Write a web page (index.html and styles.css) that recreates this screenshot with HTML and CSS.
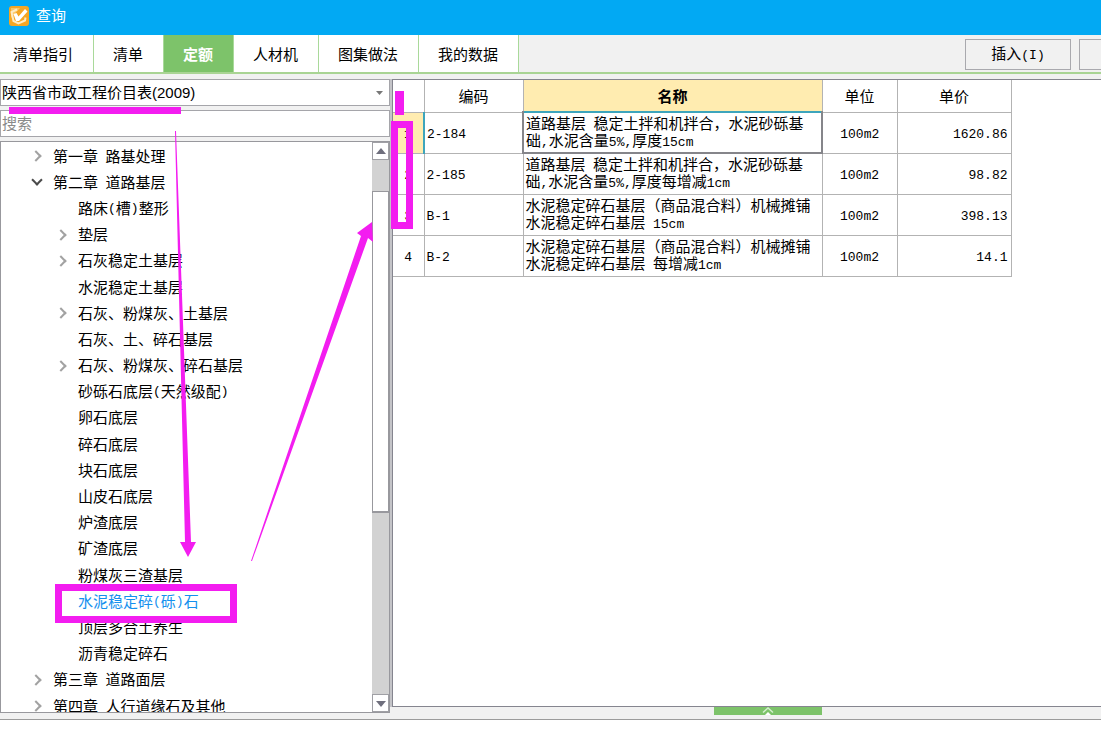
FILE: index.html
```html
<!DOCTYPE html>
<html lang="zh-CN">
<head>
<meta charset="utf-8">
<title>查询</title>
<link rel="stylesheet" href="styles.css">
</head>
<body>
<div class="app">
  <header class="titlebar">
    <svg class="logo" viewBox="0 0 20 20" aria-hidden="true">
      <rect width="20" height="20" rx="3" fill="#f5a623"/>
      <path d="M2 2h9L2 12z" fill="#fbc766"/>
      <path d="M8 3.500L2.500 6l2 9 5 2.500 6.500-3 .5-3" fill="none" stroke="#fdebc4" stroke-width="2"/>
      <path d="M4.500 8l3-1 2 3.500L16 3l2.500 2.500L10 15H7z" fill="#fff"/>
    </svg>
    <h1 class="title">查询</h1>
  </header>

  <div class="toolbar">
    <nav class="tabs">
      <button class="tab tab-first">清单指引</button>
      <button class="tab">清单</button>
      <button class="tab tab-active">定额</button>
      <button class="tab">人材机</button>
      <button class="tab">图集做法</button>
      <button class="tab">我的数据</button>
    </nav>
    <div class="actions">
      <button class="action">插入<span class="en">(I)</span></button>
      <button class="action action-cut" aria-label="更多"></button>
    </div>
  </div>

  <main class="panes">
    <section class="side">
      <div class="combo">
        <select class="combo-select" aria-label="定额库"><option>陕西省市政工程价目表(2009)</option></select>
        <svg class="combo-caret" viewBox="0 0 7 4" aria-hidden="true"><path d="M0 0h7L3.500 4z" fill="#777"/></svg>
      </div>
      <input class="search" type="text" placeholder="搜索" aria-label="搜索">
      <div class="tree">
        <ul class="tree-list">
          <li class="node top"><i class="chev"></i>第一章&ensp;路基处理</li>
          <li class="node top"><i class="chev open"></i>第二章&ensp;道路基层</li>
          <li class="node">路床<span class="en">(</span>槽<span class="en">)</span>整形</li>
          <li class="node"><i class="chev"></i>垫层</li>
          <li class="node"><i class="chev"></i>石灰稳定土基层</li>
          <li class="node">水泥稳定土基层</li>
          <li class="node"><i class="chev"></i>石灰、粉煤灰、土基层</li>
          <li class="node">石灰、土、碎石基层</li>
          <li class="node"><i class="chev"></i>石灰、粉煤灰、碎石基层</li>
          <li class="node">砂砾石底层<span class="en">(</span>天然级配<span class="en">)</span></li>
          <li class="node">卵石底层</li>
          <li class="node">碎石底层</li>
          <li class="node">块石底层</li>
          <li class="node">山皮石底层</li>
          <li class="node">炉渣底层</li>
          <li class="node">矿渣底层</li>
          <li class="node">粉煤灰三渣基层</li>
          <li class="node selected">水泥稳定碎<span class="en">(</span>砾<span class="en">)</span>石</li>
          <li class="node">顶层多合土养生</li>
          <li class="node">沥青稳定碎石</li>
          <li class="node top"><i class="chev"></i>第三章&ensp;道路面层</li>
          <li class="node top"><i class="chev"></i>第四章&ensp;人行道缘石及其他</li>
        </ul>
        <div class="scrollbar">
          <button class="scroll-btn" aria-label="向上滚动"><svg class="arrow" viewBox="0 0 12 7"><path d="M1 6h10L6 0z" fill="#6f6f7d"/></svg></button>
          <div class="track"><div class="thumb"></div></div>
          <button class="scroll-btn" aria-label="向下滚动"><svg class="arrow" viewBox="0 0 12 7"><path d="M1 1h10L6 7z" fill="#6f6f7d"/></svg></button>
        </div>
      </div>
    </section>

    <section class="content">
      <div class="grid-area">
        <table class="grid">
          <colgroup><col class="c-no"><col class="c-code"><col class="c-name"><col class="c-unit"><col class="c-price"></colgroup>
          <thead>
            <tr><th></th><th>编码</th><th class="sorted">名称</th><th>单位</th><th>单价</th></tr>
          </thead>
          <tbody>
            <tr><td class="no current">1</td><td class="code">2-184</td><td class="name focus">道路基层&ensp;稳定土拌和机拌合，水泥砂砾基<br>础<span class="en">,</span>水泥含量<span class="en">5%,</span>厚度<span class="en">15cm</span></td><td class="unit">100m2</td><td class="price">1620.86</td></tr>
            <tr><td class="no">2</td><td class="code">2-185</td><td class="name">道路基层&ensp;稳定土拌和机拌合，水泥砂砾基<br>础<span class="en">,</span>水泥含量<span class="en">5%,</span>厚度每增减<span class="en">1cm</span></td><td class="unit">100m2</td><td class="price">98.82</td></tr>
            <tr><td class="no">3</td><td class="code">B-1</td><td class="name">水泥稳定碎石基层（商品混合料）机械摊铺<br>水泥稳定碎石基层&ensp;<span class="en">15cm</span></td><td class="unit">100m2</td><td class="price">398.13</td></tr>
            <tr><td class="no">4</td><td class="code">B-2</td><td class="name">水泥稳定碎石基层（商品混合料）机械摊铺<br>水泥稳定碎石基层&ensp;每增减<span class="en">1cm</span></td><td class="unit">100m2</td><td class="price">14.1</td></tr>
          </tbody>
        </table>
      </div>
      <div class="splitter">
        <button class="expand" aria-label="展开"><svg class="expand-icon" viewBox="0 0 12 8"><path d="M1 5.500L6 1l5 4.500" fill="none" stroke="#d5efcf" stroke-width="1.500"/><path d="M3 8l3-3 3 3z" fill="#fff"/></svg></button>
      </div>
    </section>
  </main>

  <svg class="marks" width="440" height="640" viewBox="0 0 440 640" aria-hidden="true">
    <g fill="#f31df0">
      <path d="M9 107h172v7H9z"/>
      <path d="M395 91h9v24h-9z"/>
      <path d="M175 131h1L191 542h5L188 557 180 542h5z"/>
      <path d="M251 561L361 236l-4-3L372 222l1 20-5-4L252 561z"/>
    </g>
    <g fill="none" stroke="#f31df0" stroke-width="7">
      <path d="M394.500 124.500h15v101h-15z"/>
      <path d="M58.500 587.500h175v32h-175z"/>
    </g>
  </svg>
</div>
</body>
</html>
```
FILE: styles.css
```css
* { box-sizing: border-box; }

body {
  margin: 0;
  background: #fff;
  color: #000;
  font: 15px/17px "Liberation Sans", "Noto Sans CJK SC", sans-serif;
}

button, input, select {
  margin: 0;
  padding: 0;
  border: 0;
  border-radius: 0;
  background: none;
  color: inherit;
  font: inherit;
}

.app {
  position: relative;
  display: flex;
  flex-direction: column;
  min-height: 100vh;
  padding-bottom: 16px;
  overflow: hidden;
}

.en { font-family: "Liberation Mono", monospace; font-size: 13px; }

.titlebar {
  display: flex;
  align-items: center;
  gap: 7px;
  height: 35px;
  padding: 0 9px 4px;
  background: #02a9f3;
}
.logo { width: 20px; height: 20px; }
.title { margin: 0; color: #fff; font-size: 15px; font-weight: 400; }

.toolbar {
  display: flex;
  justify-content: space-between;
  height: 39px;
  background: #f1f1f1;
  border-bottom: 2px solid #a9d494;
}
.tabs { display: flex; }
.tab {
  padding: 2px 20px 0 19px;
  background: #fff;
  border-right: 1px solid #a9d99a;
  white-space: nowrap;
}
.tab-first { padding-left: 13px; }
.tab-active { background: #7dc36a; color: #fff; font-weight: 700; }
.actions { display: flex; gap: 8px; padding-top: 4px; }
.action {
  width: 106px;
  height: 31px;
  background: #f1f1f1;
  border: 1px solid #a9a9ae;
}
.action-cut { width: 22px; border-right: 0; }

.panes {
  flex: 1;
  display: flex;
  padding-top: 5px;
  background: #f1f1f1;
  border-bottom: 1px solid #9b9b9b;
}

.side {
  flex: none;
  display: flex;
  flex-direction: column;
  gap: 4px;
  width: 390px;
  padding-bottom: 6px;
}
.combo {
  display: flex;
  align-items: center;
  height: 27px;
  padding-right: 6px;
  background: #fff;
  border: 1px solid #a5a5aa;
}
.combo-select { flex: 1; height: 25px; padding: 0 1px; appearance: none; outline: 0; }
.combo-caret { width: 7px; height: 4px; }
.search {
  height: 27px;
  padding: 0 1px;
  background: #fff;
  border: 1px solid #a5a5aa;
}
.search::placeholder { color: #8a8a8a; opacity: 1; }

.tree {
  flex: 1;
  display: flex;
  overflow: hidden;
  background: #fff;
  border: 1px solid #98989d;
}
.tree-list {
  flex: 1;
  display: flex;
  flex-direction: column;
  margin: 1px 0 -7px;
  padding: 0;
  list-style: none;
}
.node {
  position: relative;
  flex: 1 0 26px;
  display: flex;
  align-items: center;
  padding-left: 77px;
  white-space: nowrap;
}
.node.top { padding-left: 52px; }
.node.selected { color: #1590ee; }
.chev {
  position: absolute;
  left: 56px;
  width: 8px;
  height: 8px;
  border: solid #a2a2a2;
  border-width: 2px 2px 0 0;
  transform: rotate(45deg);
}
.top .chev { left: 31px; }
.top .chev.open { left: 32px; margin-bottom: 4px; border-color: #4a4a4a; transform: rotate(135deg); }

.scrollbar { display: flex; flex-direction: column; width: 17px; background: #d2d2d2; }
.scroll-btn {
  display: grid;
  place-items: center;
  height: 18px;
  background: #fff;
  border: 1px solid #a0a0a5;
}
.arrow { width: 12px; height: 7px; }
.track { flex: 1; display: flex; flex-direction: column; padding: 31px 0 0; }
.thumb { height: 64%; background: #fff; border: 1px solid #98989d; border-bottom-width: 2px; }

.content {
  flex: 1;
  display: flex;
  flex-direction: column;
  min-width: 0;
}
.grid-area {
  flex: 1;
  margin-left: 2px;
  background: #fff;
  border: solid #85858f;
  border-width: 1px 0 1px 1px;
  box-shadow: -2px 0 #c4c4c8;
}
.grid { table-layout: fixed; width: 618px; border-collapse: collapse; }
.c-no { width: 31px; }
.c-code { width: 99px; }
.c-name { width: 299px; }
.c-unit { width: 75px; }
.c-price { width: 114px; }
.grid th, .grid td { padding: 1px 2px 0; border: 1px solid #b3b3b3; }
.grid tr > :first-child { border-left: 0; }
.grid thead th { height: 32px; border-top: 0; font-weight: 400; }
.grid thead .sorted { background: #ffecb0; font-weight: 700; }
.grid td { height: 41px; }
.grid .current { background: #ffecb0; border-right: 2px solid #3da5bc; }
.grid .focus { border: 2px solid #85858a; border-top-color: #3da5bc; }
.grid .no, .grid .code, .grid .unit, .grid .price {
  padding-top: 3px;
  font-family: "Liberation Mono", monospace;
  font-size: 13px;
}
.no, .unit { text-align: center; }
.grid .price { padding-right: 3px; text-align: right; }
.name { white-space: nowrap; }

.splitter { height: 12px; padding-left: 324px; }
.expand { display: flex; justify-content: center; width: 108px; height: 8px; background: #7dc36a; }
.expand-icon { width: 12px; height: 8px; }

/* callouts drawn over the panes */
.marks { position: absolute; top: 0; left: 0; pointer-events: none; }
```
